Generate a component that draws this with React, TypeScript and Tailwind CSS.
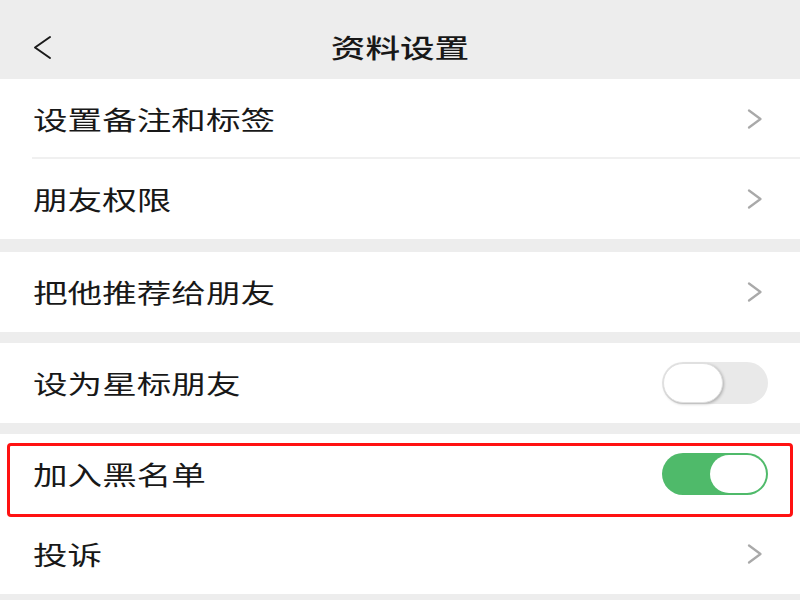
import React from "react";

const font = { fontFamily: '"Noto Sans CJK SC", "Noto Sans", sans-serif' };

function Chevron() {
  return (
    <svg width="16" height="20" viewBox="0 0 16 20" className="shrink-0">
      <path d="M2 1.5 L13.5 10 L2 18.5" fill="none" stroke="#a9a9a9" strokeWidth="2.2" strokeLinecap="round" strokeLinejoin="round" />
    </svg>
  );
}

function Label({ text }: { text: string }) {
  return (
    <span className="inline-block origin-left scale-x-[1.33] text-[26px] leading-none text-[#181818] whitespace-nowrap">
      {text}
    </span>
  );
}

function Toggle({ on }: { on: boolean }) {
  if (on) {
    return (
      <div className="flex h-[42px] w-[106px] items-center justify-end rounded-full bg-[#4fba6a] pr-[2px]">
        <div className="h-[38px] w-[56px] rounded-full bg-white"></div>
      </div>
    );
  }
  return (
    <div className="flex h-[42px] w-[106px] items-center rounded-full bg-[#e9e9e9] pl-[1px]">
      <div className="h-[40px] w-[60px] rounded-full bg-white shadow-[1px_1px_3px_rgba(0,0,0,0.25)] border border-[#e0e0e0]"></div>
    </div>
  );
}

function Row({ text, right, divider }: { text: string; right: React.ReactNode; divider?: boolean }) {
  return (
    <div className="relative flex h-[80px] items-center justify-between pl-[33px] pr-[37px]">
      <Label text={text} />
      {right}
      {divider && <div className="absolute bottom-0 left-[32px] right-0 h-[2px] bg-[#f0f0f0]"></div>}
    </div>
  );
}

export default function App() {
  return (
    <div className="flex h-[600px] w-[800px] flex-col overflow-hidden bg-[#ededed]" style={font}>
      <div className="relative flex h-[79px] shrink-0 items-center justify-center pt-[15px]">
        <svg width="24" height="26" viewBox="0 0 24 26" className="absolute left-[31px] top-[35px]">
          <path d="M19 2 L4 12.5 L19 23" fill="none" stroke="#1a1a1a" strokeWidth="2" strokeLinecap="round" strokeLinejoin="round" />
        </svg>
        <span className="inline-block scale-x-[1.33] text-[26px] font-medium leading-none text-[#181818]">资料设置</span>
      </div>
      <div className="shrink-0 bg-white">
        <Row text="设置备注和标签" right={<Chevron />} divider />
        <Row text="朋友权限" right={<Chevron />} />
      </div>
      <div className="h-[13px] shrink-0"></div>
      <div className="shrink-0 bg-white">
        <Row text="把他推荐给朋友" right={<Chevron />} />
      </div>
      <div className="h-[11px] shrink-0"></div>
      <div className="shrink-0 bg-white">
        <div className="flex h-[80px] items-center justify-between pl-[33px] pr-[32px]">
          <Label text="设为星标朋友" />
          <Toggle on={false} />
        </div>
      </div>
      <div className="h-[11px] shrink-0"></div>
      <div className="relative shrink-0 bg-white">
        <div className="flex h-[80px] items-center justify-between pl-[33px] pr-[32px]">
          <Label text="加入黑名单" />
          <Toggle on={true} />
        </div>
        <Row text="投诉" right={<Chevron />} />
        <div className="absolute left-[7px] right-[7px] top-[9px] h-[74px] rounded-[4px] border-[3px] border-[#ff1212]"></div>
      </div>
    </div>
  );
}
